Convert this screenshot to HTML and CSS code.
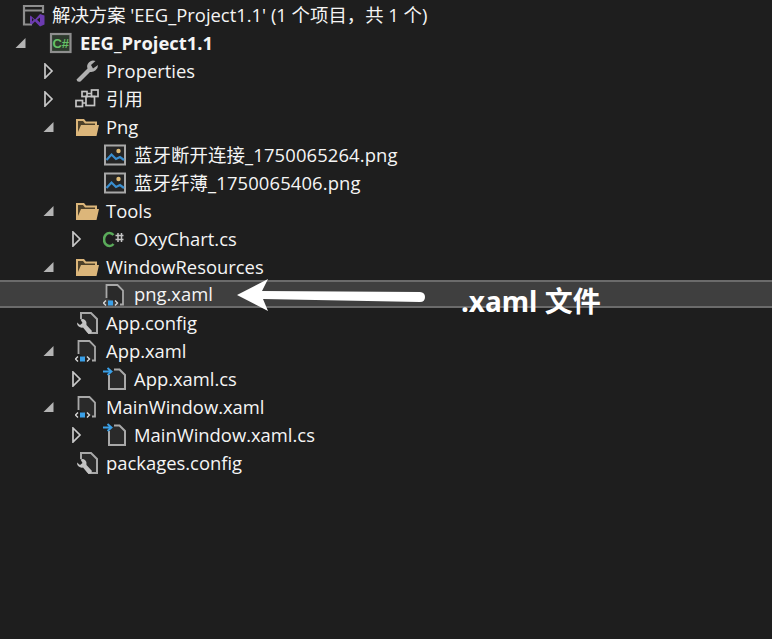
FILE: index.html
```html
<!DOCTYPE html>
<html lang="zh-CN">
<head>
  <meta charset="UTF-8">
  <title>解决方案资源管理器</title>
  <link rel="stylesheet" href="styles.css">
</head>
<body>
  <svg class="defs" width="0" height="0">
    <defs>
      <symbol id="i-open" viewBox="0 0 16 16"><path d="M13.500 3 L13.500 13 L3.500 13 Z" fill="#b4b4b4"/></symbol>
      <symbol id="i-closed" viewBox="0 0 16 16"><path d="M5 1 L12 8 L5 15 Z" fill="none" stroke="#c8c8c8" stroke-width="1.7"/></symbol>
      <symbol id="i-solution" viewBox="0 0 24 24">
        <path d="M11 21.500 H3 V3 H22 V10 M3 7.500 H22" fill="none" stroke="#8e8e8e" stroke-width="2.200"/>
        <path d="M9.500 12.500 L14 16.500 L19 11 L23.500 12.500 V21.500 L19 23.500 L14 18.500 L11 21.500 L9 20.500 V13.500 Z M11 15 V18.500 L12.800 16.800 Z M19 14.500 L16 16.800 L19 19.500 Z" fill="#6c3bb0" fill-rule="evenodd"/>
      </symbol>
      <symbol id="i-project" viewBox="0 0 24 24">
        <rect x="3" y="3" width="19.500" height="18" fill="#2d3a2d" stroke="#8e8e8e" stroke-width="2.200"/>
        <text x="12.800" y="17" text-anchor="middle" class="sharp" font-size="13" fill="#66c266">C#</text>
      </symbol>
      <symbol id="i-wrench" viewBox="0 0 24 24">
        <path d="M1.500 20.500 L12.500 9.500 A6 6 0 0 1 20.500 2 L16 6 L18 9.500 L23 6 A7 7 0 0 1 15 13 L5.500 22.500 Q2 23.500 1.500 20.500 Z" fill="#b0b0b0"/>
      </symbol>
      <symbol id="i-refs" viewBox="0 0 24 24">
        <g fill="none" stroke="#c4c4c4" stroke-width="1.700">
          <rect x="1" y="13.500" width="6.500" height="6"/>
          <rect x="11" y="9.500" width="8.500" height="9"/>
          <rect x="7" y="4.500" width="5" height="5"/>
          <rect x="16.500" y="3" width="6.500" height="6.500"/>
          <path d="M7.500 16 H11 M12 6.500 H16.500"/>
        </g>
      </symbol>
      <symbol id="i-folder" viewBox="0 0 24 24">
        <path d="M1 21 V4 H9 L11 6.500 H22 V10 H24 L21.500 21 Z" fill="#dcb67a"/>
        <path d="M3 12 V6 H8 L10 8.500 H20 V10 H6 L3 17 Z" fill="#4d4029"/>
      </symbol>
      <symbol id="i-image" viewBox="0 0 24 24">
        <rect x="2" y="2.500" width="20" height="19" fill="#252525" stroke="#a8a8a8" stroke-width="2"/>
        <circle cx="15.500" cy="8" r="2.200" fill="#e0bd78"/>
        <path d="M3.500 17 L8.500 11.500 L13 16 L17 14 L21 17" fill="none" stroke="#3a8fd0" stroke-width="2.200"/>
      </symbol>
      <symbol id="i-csharp" viewBox="0 0 24 24">
        <path d="M10.500 8 A5.500 6.500 0 1 0 10.500 17" fill="none" stroke="#5aab5a" stroke-width="2.600"/>
        <path d="M15 6 V15 M18.500 6 V15 M12.500 8.500 H20.500 M12.500 12.500 H20.500" fill="none" stroke="#c4c4c4" stroke-width="1.500"/>
      </symbol>
      <symbol id="i-xaml" viewBox="0 0 24 24">
        <path d="M3.500 15 V2 H14.500 L20 7.500 V21.500 H17" fill="#2a2a2a" stroke="#a8a8a8" stroke-width="1.800"/>
        <rect x="5" y="17.500" width="5" height="5" fill="#3aa0e8"/>
        <path d="M3 17.500 L0.500 20 L3 22.500 M12 17.500 L14.500 20 L12 22.500" fill="none" stroke="#d8d8d8" stroke-width="1.400"/>
      </symbol>
      <symbol id="i-config" viewBox="0 0 24 24">
        <path d="M6 8 V2 H16 L22 8 V22 H13" fill="#2a2a2a" stroke="#a8a8a8" stroke-width="2"/>
        <path d="M2 11.500 L5 14 L7.500 12 L5.500 8.500 A4.500 4.500 0 0 1 11.500 14 L17 20 Q16 24 12.500 22 L8 16.500 A4.800 4.800 0 0 1 2 11.500 Z" fill="#c4c4c4"/>
      </symbol>
      <symbol id="i-codebehind" viewBox="0 0 24 24">
        <path d="M6 8 V22 H22 V8 L16.500 2.500 H11" fill="#2a2a2a" stroke="#a8a8a8" stroke-width="2"/>
        <path d="M0 4.500 H7.500 M4.500 1 L8.500 4.500 L4.500 8" fill="none" stroke="#3aa0e8" stroke-width="1.900"/>
      </symbol>
    </defs>
  </svg>

  <div class="tree">
    <div class="row level-0">
      <svg class="icon"><use href="#i-solution"/></svg>
      <span class="label">解决方案 'EEG_Project1.1' (1 个项目，共 1 个)</span>
    </div>
    <div class="row level-1">
      <svg class="expander"><use href="#i-open"/></svg>
      <svg class="icon"><use href="#i-project"/></svg>
      <span class="label bold">EEG_Project1.1</span>
    </div>
    <div class="row level-2">
      <svg class="expander"><use href="#i-closed"/></svg>
      <svg class="icon"><use href="#i-wrench"/></svg>
      <span class="label">Properties</span>
    </div>
    <div class="row level-2">
      <svg class="expander"><use href="#i-closed"/></svg>
      <svg class="icon"><use href="#i-refs"/></svg>
      <span class="label">引用</span>
    </div>
    <div class="row level-2">
      <svg class="expander"><use href="#i-open"/></svg>
      <svg class="icon"><use href="#i-folder"/></svg>
      <span class="label">Png</span>
    </div>
    <div class="row level-3">
      <span class="expander"></span>
      <svg class="icon"><use href="#i-image"/></svg>
      <span class="label wide">蓝牙断开连接_1750065264.png</span>
    </div>
    <div class="row level-3">
      <span class="expander"></span>
      <svg class="icon"><use href="#i-image"/></svg>
      <span class="label wide">蓝牙纤薄_1750065406.png</span>
    </div>
    <div class="row level-2">
      <svg class="expander"><use href="#i-open"/></svg>
      <svg class="icon"><use href="#i-folder"/></svg>
      <span class="label">Tools</span>
    </div>
    <div class="row level-3">
      <svg class="expander"><use href="#i-closed"/></svg>
      <svg class="icon"><use href="#i-csharp"/></svg>
      <span class="label">OxyChart.cs</span>
    </div>
    <div class="row level-2">
      <svg class="expander"><use href="#i-open"/></svg>
      <svg class="icon"><use href="#i-folder"/></svg>
      <span class="label">WindowResources</span>
    </div>
    <div class="row level-3 selected">
      <span class="expander"></span>
      <svg class="icon"><use href="#i-xaml"/></svg>
      <span class="label">png.xaml</span>
    </div>
    <div class="row level-2">
      <span class="expander"></span>
      <svg class="icon"><use href="#i-config"/></svg>
      <span class="label">App.config</span>
    </div>
    <div class="row level-2">
      <svg class="expander"><use href="#i-open"/></svg>
      <svg class="icon"><use href="#i-xaml"/></svg>
      <span class="label">App.xaml</span>
    </div>
    <div class="row level-3">
      <svg class="expander"><use href="#i-closed"/></svg>
      <svg class="icon"><use href="#i-codebehind"/></svg>
      <span class="label">App.xaml.cs</span>
    </div>
    <div class="row level-2">
      <svg class="expander"><use href="#i-open"/></svg>
      <svg class="icon"><use href="#i-xaml"/></svg>
      <span class="label">MainWindow.xaml</span>
    </div>
    <div class="row level-3">
      <svg class="expander"><use href="#i-closed"/></svg>
      <svg class="icon"><use href="#i-codebehind"/></svg>
      <span class="label">MainWindow.xaml.cs</span>
    </div>
    <div class="row level-2">
      <span class="expander"></span>
      <svg class="icon"><use href="#i-config"/></svg>
      <span class="label">packages.config</span>
    </div>
  </div>

  <!-- annotation drawn on top of the tree -->
  <svg class="arrow" width="200" height="40" viewBox="0 0 200 40">
    <path d="M1 17 L32 1 L26 13 L184 14 Q189 14.500 189 19 Q189 24 184 24 L27 21 L32 33 Z" fill="#ffffff"/>
  </svg>
  <div class="note">.xaml 文件</div>
</body>
</html>
```

FILE: styles.css
```css
* {
  box-sizing: border-box;
  margin: 0;
  padding: 0;
}

html, body {
  height: 100%;
}

body {
  position: relative;
  background: #1e1e1e;
  color: #f5f5f5;
  font-family: "Open Sans", "Noto Sans CJK SC", sans-serif;
  font-size: 18.4px;
  overflow: hidden;
}

.defs {
  position: absolute;
}

.sharp {
  font-family: "Liberation Sans", sans-serif;
  font-weight: bold;
}

.tree {
  padding-top: 1px;
}

.row {
  display: flex;
  align-items: center;
  height: 28px;
  white-space: nowrap;
}

.level-0 {
  padding-left: 21px;
}

.level-1 {
  padding-left: 12px;
}

.level-2 {
  padding-left: 40px;
}

.level-3 {
  padding-left: 68px;
}

.selected {
  margin: -1px 0 1px;
  padding-top: 1px;
  background: #3f3f3f;
  border-top: 2px solid #6b6b6b;
  border-bottom: 2px solid #6b6b6b;
}

.expander {
  flex: none;
  width: 16px;
  height: 16px;
  margin-right: 20px;
}

.level-2 .expander,
.level-3 .expander {
  margin-right: 19px;
}

.icon {
  flex: none;
  width: 24px;
  height: 24px;
}

.label {
  margin-left: 8px;
  margin-bottom: 2px;
}

.level-2 .label,
.level-3 .label {
  margin-left: 7px;
}

.level-0 .label {
  margin-left: 7px;
}

.wide {
  letter-spacing: 0.13px;
}

.bold {
  font-weight: bold;
}

.arrow {
  position: absolute;
  left: 236px;
  top: 278px;
}

.note {
  position: absolute;
  left: 461px;
  top: 283px;
  color: #ffffff;
  font-family: "Noto Sans", "Noto Sans CJK SC", sans-serif;
  font-size: 28px;
  font-weight: bold;
  line-height: 36px;
}
```
